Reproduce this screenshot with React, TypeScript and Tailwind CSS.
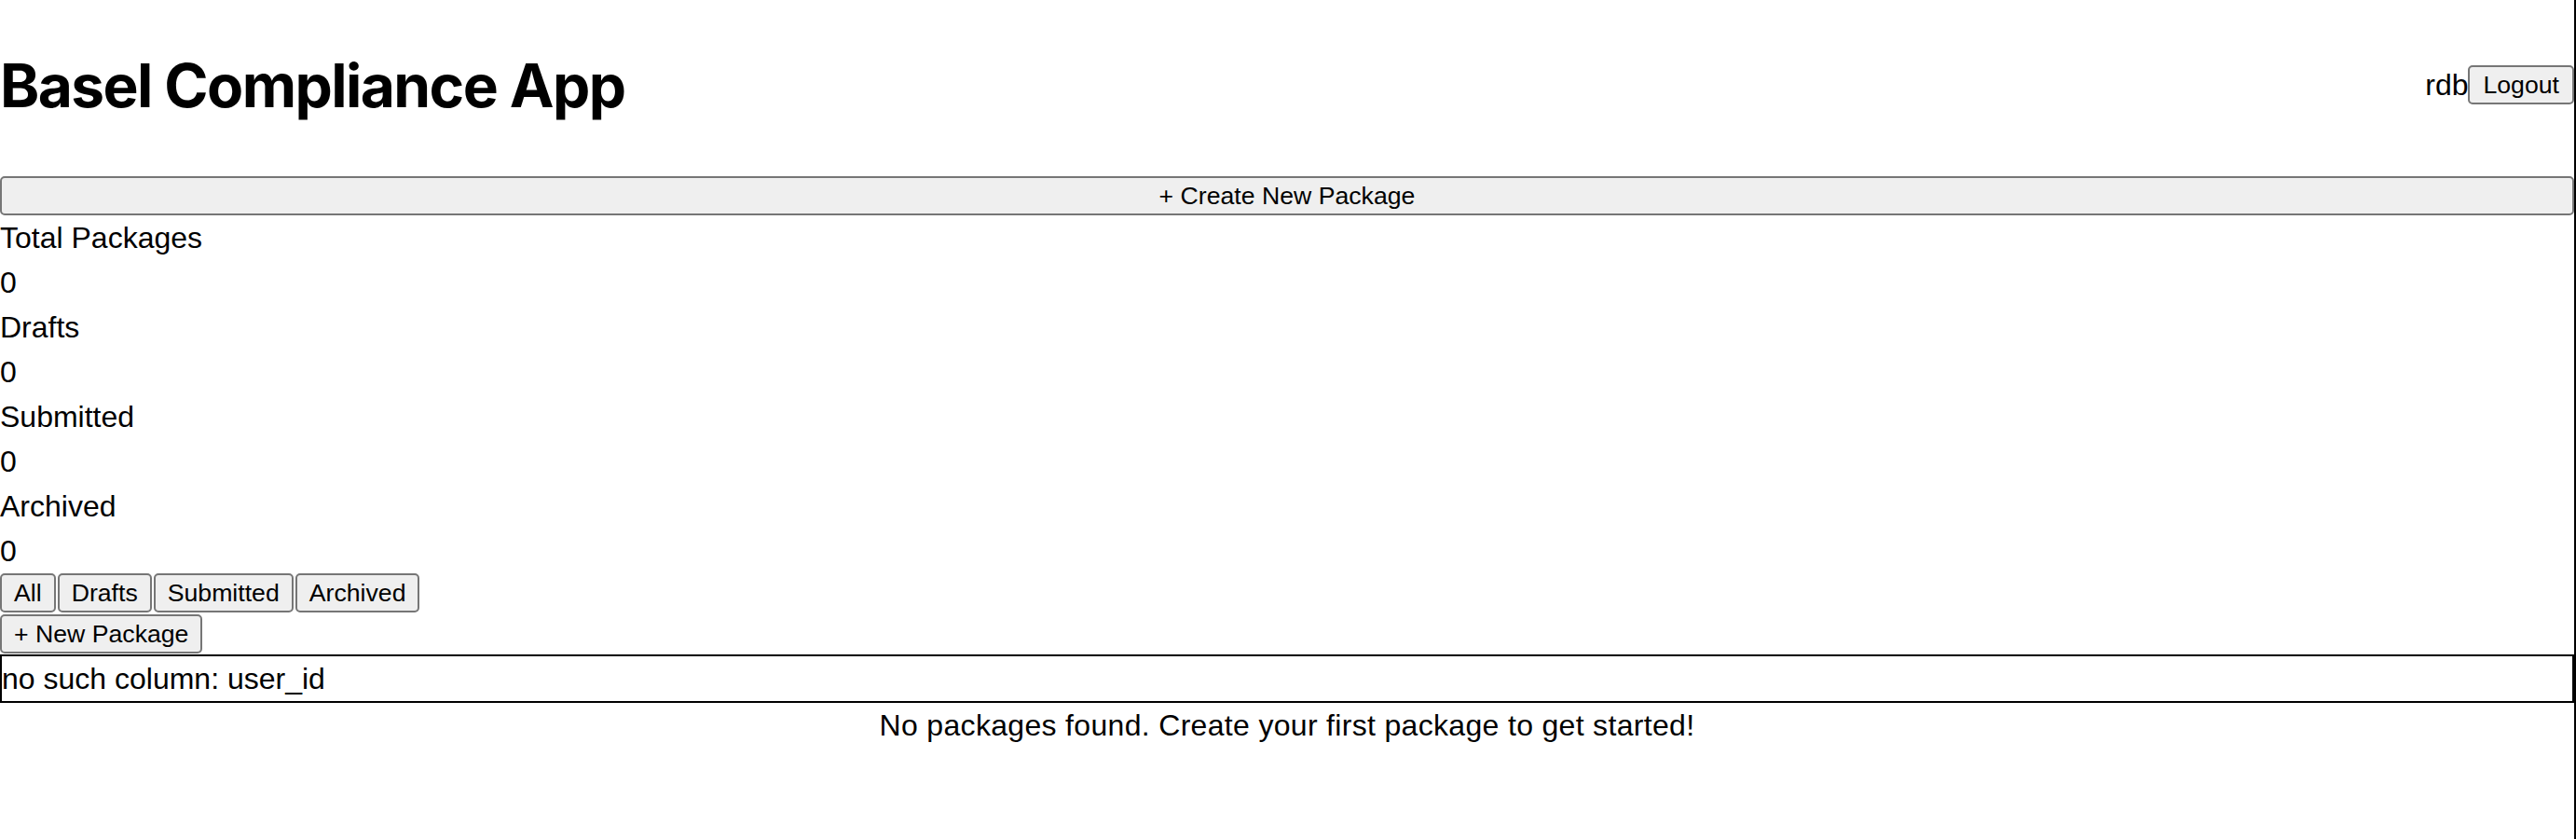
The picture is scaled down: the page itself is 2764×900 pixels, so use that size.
import type { ReactNode } from "react";

function Btn({ children, className = "" }: { children: ReactNode; className?: string }) {
  return (
    <button
      className={
        "rounded-[5px] border-2 border-[#767676] bg-[#efefef] px-[13px] py-[2px] font-['Liberation_Sans',Arial,sans-serif] text-[26.67px] leading-[34px] text-black " +
        className
      }
    >
      {children}
    </button>
  );
}

const stats = [
  ["Total Packages", 0],
  ["Drafts", 0],
  ["Submitted", 0],
  ["Archived", 0],
] as const;

const filters = ["All", "Drafts", "Submitted", "Archived"];

export default function App() {
  return (
    <div className="min-h-screen w-full border-r-2 border-black bg-white font-['Liberation_Sans',Arial,sans-serif] text-[32px] leading-[48px] text-black">
      <header className="flex h-[182px] items-center justify-between">
        <h1 className="mt-[2px] font-['Inter',sans-serif] text-[64px] font-bold leading-[96px] tracking-[-0.025em]">
          Basel Compliance App
        </h1>
        <div className="flex items-center">
          <span>rdb</span>
          <Btn className="px-[14px]">Logout</Btn>
        </div>
      </header>

      <Btn className="mt-[7px] block w-full">+ Create New Package</Btn>

      <div>
        {stats.map(([label, value]) => (
          <div key={label}>
            <div>{label}</div>
            <div>{value}</div>
          </div>
        ))}
      </div>

      <div className="flex gap-[2px]">
        {filters.map((f) => (
          <Btn key={f}>{f}</Btn>
        ))}
      </div>
      <Btn className="mt-[2px] block">+ New Package</Btn>

      <div className="mt-[1px] border-2 border-black">no such column: user_id</div>

      <p className="text-center tracking-[0.01em]">No packages found. Create your first package to get started!</p>
    </div>
  );
}
